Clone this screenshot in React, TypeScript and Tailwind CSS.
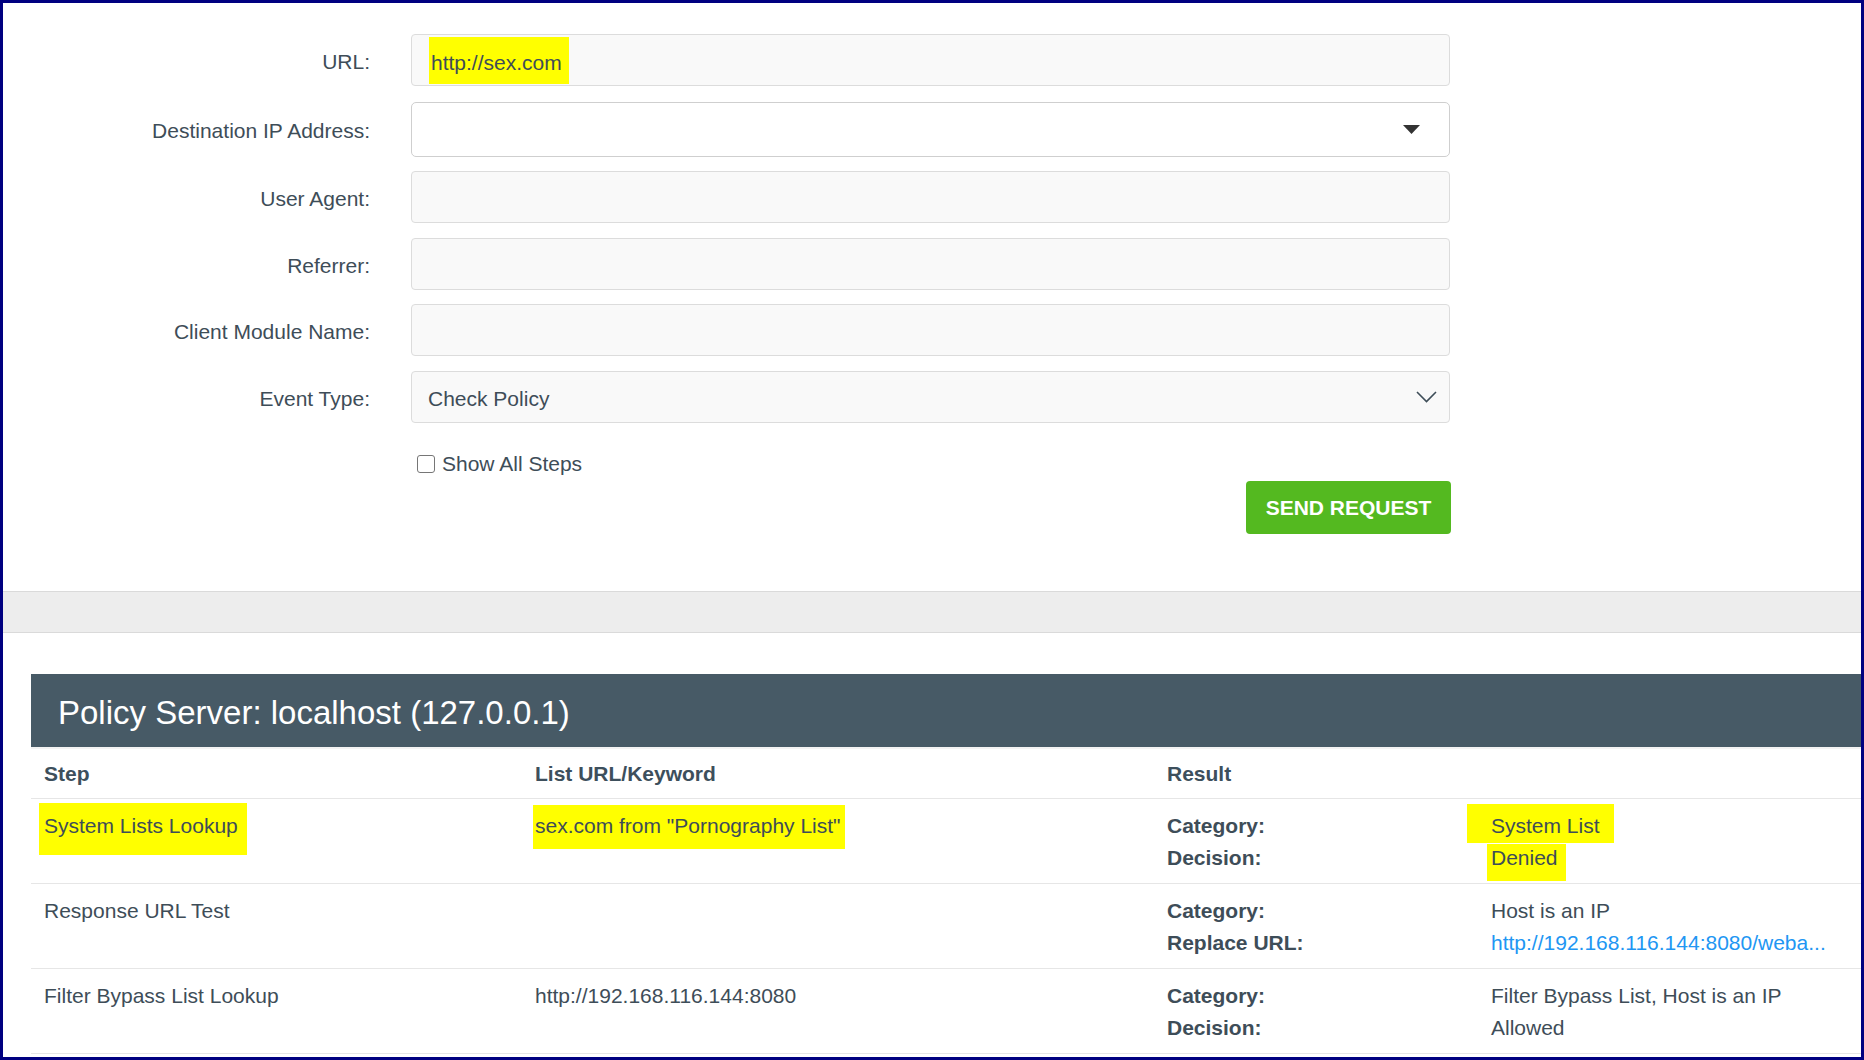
import React from "react";

const labelCls = "w-[367px] shrink-0 text-right pt-[3px]";
const inputCls =
  "ml-[41px] w-[1039px] h-[52px] rounded-[4px] border border-[#dcdcdc] bg-[#f9f9f9]";

function FormRow({ label, children, className = "" }: { label: string; children?: React.ReactNode; className?: string }) {
  return (
    <div className={`flex items-center ${className}`}>
      <div className={labelCls}>{label}</div>
      {children ?? <div className={inputCls} />}
    </div>
  );
}

function ResultPair({ rows }: { rows: [string, React.ReactNode][] }) {
  return (
    <div className="grid grid-cols-[324px_1fr]">
      {rows.map(([k, v]) => (
        <React.Fragment key={k}>
          <div className="font-bold">{k}</div>
          <div className="whitespace-nowrap">{v}</div>
        </React.Fragment>
      ))}
    </div>
  );
}

export default function App() {
  return (
    <div
      className="w-[1864px] h-[1060px] overflow-hidden border-[3px] border-[#000080] bg-white text-[21px] leading-[32px] text-[#3e4d58]"
      style={{ fontFamily: '"Liberation Sans", Arial, sans-serif' }}
    >
      {/* request form */}
      <div className="pt-[31px]">
        <FormRow label="URL:" className="mb-[16px]">
          <div className={`${inputCls} flex items-center pl-[17px]`}>
            <span className="bg-[#ffff00] pl-[2px] pr-[7px] pt-[10px] pb-[5px]">http://sex.com</span>
          </div>
        </FormRow>
        <FormRow label="Destination IP Address:" className="mb-[14px]">
          <div className="ml-[41px] w-[1039px] h-[55px] rounded-[5px] border border-[#cfcfcf] bg-white flex items-center justify-end pr-[29px]">
            <svg width="17" height="9" viewBox="0 0 17 9">
              <polygon points="0,0 17,0 8.5,9" fill="#333" />
            </svg>
          </div>
        </FormRow>
        <FormRow label="User Agent:" className="mb-[15px]" />
        <FormRow label="Referrer:" className="mb-[14px]" />
        <FormRow label="Client Module Name:" className="mb-[15px]" />
        <FormRow label="Event Type:">
          <div className={`${inputCls} flex items-center justify-between pl-[16px] pr-[12px]`}>
            <span className="pt-[3px]">Check Policy</span>
            <svg width="21" height="12" viewBox="0 0 21 12">
              <path d="M1 1 L10.5 10.5 L20 1" fill="none" stroke="#3e4d58" strokeWidth="1.6" />
            </svg>
          </div>
        </FormRow>
        <div className="flex items-center mt-[25px] ml-[414px] h-[32px]">
          <div className="w-[18px] h-[18px] rounded-[3px] border border-[#767676] bg-white" />
          <span className="ml-[7px]">Show All Steps</span>
        </div>
        <div className="flex justify-end w-[1448px] mt-[1px]">
          <button className="w-[205px] h-[53px] rounded-[4px] bg-[#54b920] text-white font-bold text-[21px]">
            SEND REQUEST
          </button>
        </div>
      </div>

      {/* separator band */}
      <div className="mt-[57px] h-[42px] border-y border-[#dadada] bg-[#ededed]" />

      {/* results */}
      <div className="ml-[28px] mt-[41px]">
        <div className="h-[73px] bg-[#475a66] flex items-center pl-[27px] pt-[4px] text-white text-[33px]">
          Policy Server: localhost (127.0.0.1)
        </div>
        <div className="grid grid-cols-[491px_632px_1fr] h-[52px] items-center border-t-2 border-[#f3f3f3] border-b border-b-[#e6e6e6] font-bold text-[#3d4f5c]">
          <div className="px-[13px]">Step</div>
          <div className="px-[13px]">List URL/Keyword</div>
          <div className="px-[13px]">Result</div>
        </div>

        <div className="grid grid-cols-[491px_632px_1fr] h-[85px] pt-[11px] border-b border-[#e6e6e6]">
          <div className="px-[13px]">
            <span className="bg-[#ffff00] pl-[5px] -ml-[5px] pr-[9px] pt-[11px] pb-[18px]">System Lists Lookup</span>
          </div>
          <div className="px-[13px]">
            <span className="bg-[#ffff00] pl-[2px] -ml-[2px] pr-[4px] pt-[9px] pb-[12px]">sex.com from "Pornography List"</span>
          </div>
          <div className="px-[13px]">
            <ResultPair
              rows={[
                ["Category:", <span className="bg-[#ffff00] pl-[24px] -ml-[24px] pr-[14px] pt-[10px] pb-[6px]">System List</span>],
                ["Decision:", <span className="bg-[#ffff00] pl-[4px] -ml-[4px] pr-[8px] pt-[2px] pb-[12px]">Denied</span>],
              ]}
            />
          </div>
        </div>

        <div className="grid grid-cols-[491px_632px_1fr] h-[85px] pt-[11px] border-b border-[#e6e6e6]">
          <div className="px-[13px]">Response URL Test</div>
          <div className="px-[13px]" />
          <div className="px-[13px]">
            <ResultPair
              rows={[
                ["Category:", "Host is an IP"],
                ["Replace URL:", <span className="text-[#2196f3]">http://192.168.116.144:8080/weba...</span>],
              ]}
            />
          </div>
        </div>

        <div className="grid grid-cols-[491px_632px_1fr] h-[85px] pt-[11px] border-b border-[#e6e6e6]">
          <div className="px-[13px]">Filter Bypass List Lookup</div>
          <div className="px-[13px]">http://192.168.116.144:8080</div>
          <div className="px-[13px]">
            <ResultPair
              rows={[
                ["Category:", "Filter Bypass List, Host is an IP"],
                ["Decision:", "Allowed"],
              ]}
            />
          </div>
        </div>
      </div>
    </div>
  );
}
